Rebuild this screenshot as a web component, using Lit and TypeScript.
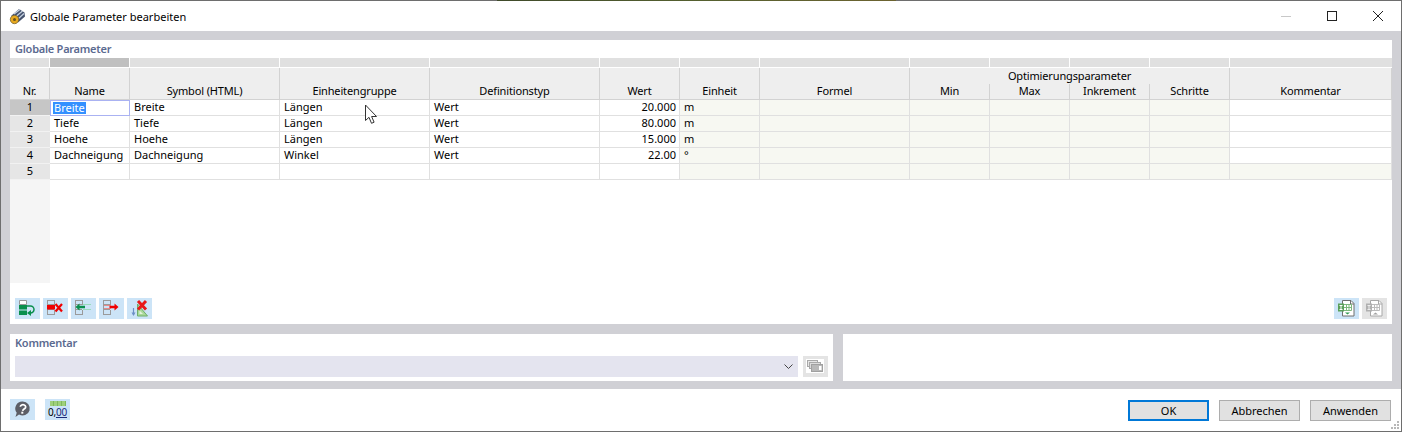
import { LitElement, html, css, svg } from "lit";
import { customElement } from "lit/decorators.js";

const columns = [
  { label: "Nr.", cls: "nr" },
  { label: "Name" },
  { label: "Symbol (HTML)" },
  { label: "Einheitengruppe" },
  { label: "Definitionstyp" },
  { label: "Wert" },
  { label: "Einheit" },
  { label: "Formel" },
  { label: "Min", opt: true },
  { label: "Max", opt: true },
  { label: "Inkrement", opt: true },
  { label: "Schritte", opt: true },
  { label: "Kommentar" },
];

const rows = [
  ["Breite", "Breite", "Längen", "Wert", "20.000", "m"],
  ["Tiefe", "Tiefe", "Längen", "Wert", "80.000", "m"],
  ["Hoehe", "Hoehe", "Längen", "Wert", "15.000", "m"],
  ["Dachneigung", "Dachneigung", "Winkel", "Wert", "22.00", "°"],
  ["", "", "", "", "", ""],
];

const frame = svg`<path d="M4 2.500h8M4 16.500h8M4.500 2v15M11.500 2v5M11.500 12v5" stroke="#9a9a9a" fill="none"/>
  <path d="M5 6.500h6M5 11.500h6" stroke="#9a9a9a" fill="none"/>`;

const icons: Record<string, unknown> = {
  add: svg`<path d="M4.500 2.500h7v4h-7z" fill="#fff" stroke="#9a9a9a"/>
    <rect x="4" y="7" width="8" height="4.500" fill="#0a8f4d"/>
    <rect x="4" y="12.500" width="8" height="4.500" fill="#0a8f4d"/>
    <path d="M12 8h3.500a3.500 3.500 0 0 1 0 7H15" fill="none" stroke="#0a8f4d" stroke-width="1.500"/>
    <path d="M16 12v6l-4-3z" fill="#0a8f4d"/>`,
  del: svg`${frame}<rect x="4" y="7" width="8" height="4.500" fill="#f00000"/>
    <path d="M12.500 6l6.500 7.500M19 6l-6.500 7.500" stroke="#f00000" stroke-width="2.200"/>`,
  left: svg`${frame}
    <path d="M12 6.500h8M12 11.500h8" stroke="#9adcbc" fill="none"/>
    <path d="M4.500 9l4-3.500v2.200h5.500v2.600h-5.500v2.200z" fill="#0a8f4d"/>`,
  right: svg`${frame}
    <path d="M5 7.500h7M5 10.500h7" stroke="#e98a8a" fill="none"/>
    <path d="M19.500 9l-4-3.500v2.200h-5v2.600h5v2.200z" fill="#f00000"/>`,
  tri: svg`<path d="M10.500 6v12h10z" fill="#a9d99a" stroke="#6fae6a"/>
    <path d="M12.500 12.500v3.500h3.500z" fill="#e4f2dc"/>
    <path d="M6.500 10v7" stroke="#6d8fc6" stroke-width="1.200"/>
    <path d="M4.500 14.500l2 3.500 2-3.500z" fill="#6d8fc6"/>
    <path d="M11 3l8 8.500M19 3l-8 8.500" stroke="#e81818" stroke-width="3"/>`,
  xlsIn: svg`<path d="M8.500 2.500h8.500l3 3v12.500h-11.500z" fill="#fff" stroke="#6f6f6f"/>
    <path d="M16.500 2.500v3.500h3.500" fill="none" stroke="#6f6f6f"/>
    <rect x="4" y="5.500" width="6" height="8" fill="#5aa05a"/>
    <path d="M5.500 7.500h3M5.500 11.500h3M7 7.500v4" stroke="#fff" fill="none"/>
    <path d="M10 6.500h7.500v6h-7.500M12.500 6.500v6M15 6.500v6M10 9.500h7.500" stroke="#7db87d" fill="none"/>
    <path d="M11 14.500h5l-2.500 2z" fill="#2f9a4f"/>`,
  xlsOut: svg`<path d="M8.500 2.500h8.500l3 3v12.500h-11.500z" fill="#fff" stroke="#a8a8a8"/>
    <path d="M16.500 2.500v3.500h3.500" fill="none" stroke="#a8a8a8"/>
    <rect x="4" y="5.500" width="6" height="8" fill="#b0b0b0"/>
    <path d="M5.500 7.500h3M5.500 11.500h3M7 7.500v4" stroke="#eee" fill="none"/>
    <path d="M10 6.500h7.500v6h-7.500M12.500 6.500v6M15 6.500v6M10 9.500h7.500" stroke="#bcbcbc" fill="none"/>
    <path d="M11 16.500h5l-2.500-2z" fill="#a0a0a0"/>`,
  pages: svg`<rect x="3" y="3" width="18" height="14" fill="#fff"/>
    <rect x="4.500" y="4.500" width="10" height="6" fill="#e6e6e6" stroke="#a8a8a8"/>
    <rect x="6.500" y="6.500" width="11" height="6" fill="#dcdcdc" stroke="#a8a8a8"/>
    <rect x="8.500" y="8.500" width="11" height="7" fill="#b8b8b8" stroke="#a0a0a0"/>
    <rect x="16" y="10" width="2.500" height="4" fill="#fff"/>`,
  help: svg`<path d="M12.700 2.500a7 7 0 1 1-3.700 12.900l-3.500 2.600 1.200-4.300a7 7 0 0 1 6-11.200z" fill="#5c5e66"/>
    <path d="M10.300 7.800a2.700 2.200 0 1 1 4.300 1.900c-1.100.7-1.700 1-1.900 2.200" fill="none" stroke="#fff" stroke-width="1.700"/>
    <rect x="11.300" y="12.700" width="2" height="2" fill="#fff"/>`,
};

@customElement("app-root")
export class AppRoot extends LitElement {
  static styles = css`
    :host { display: block; width: 1402px; height: 432px; font-family: "Noto Sans", sans-serif; font-size: 11px; color: #000; overflow: hidden; }
    * { box-sizing: border-box; }
    .win { width: 1402px; height: 432px; display: flex; flex-direction: column; background: #fff; border: 1px solid #6e6e6e; border-top: 0; position: relative; }
    .edge { height: 1px; flex: none; background: linear-gradient(90deg, #6e6e6e 0, #6e6e6e 497px, #3f4a2a 497px, #55602f 700px, #6c6330 896px, #6e6e6e 896px); margin: 0 -1px; }
    .titlebar { height: 30px; flex: none; display: flex; align-items: center; padding-left: 8px; }
    .titlebar .ticon { width: 17px; height: 17px; margin-right: 4px; }
    .title { font-size: 11px; color: #000; }
    .controls { margin-left: auto; display: flex; height: 30px; align-items: center; }
    .ctrl { width: 46px; height: 30px; display: flex; align-items: center; justify-content: center; }
    .ctrl svg { width: 12px; height: 12px; display: block; }
    .body { height: 358px; flex: none; background: #d0d0d5; padding: 9px 9px 8px; display: flex; flex-direction: column; gap: 10px; }
    .panel { background: #fff; }
    .main { height: 284px; flex: none; display: flex; flex-direction: column; }
    .ptitle { height: 18px; flex: none; padding-left: 5px; font-weight: 600; color: #5b6a90; line-height: 18px; letter-spacing: -0.25px; }
    .grid { display: grid; grid-template-columns: 40px 80px 150px 150px 170px 80px 80px 150px 80px 80px 80px 80px 162px; grid-template-rows: 10px 16px 16px repeat(5, 16px); width: 1382px; }
    .strip { background: #e0e0e0; border-right: 1px solid #fff; border-bottom: 1px solid #fff; }
    .strip.sel { background: #c0c0c0; }
    .strip.last { border-right: 0; }
    .hd { background: #eeeeee; display: flex; align-items: center; justify-content: center; white-space: nowrap; line-height: 16px; letter-spacing: -0.15px; }
    .hd.full { grid-row: 2 / span 2; align-items: flex-end; border-right: 1px solid #d2d2d2; border-bottom: 1px solid #d2d2d2; }
    .hd.group { grid-row: 2; grid-column: 9 / span 4; border-right: 1px solid #d2d2d2; }
    .hd.sub { grid-row: 3; border-right: 1px solid #d2d2d2; border-bottom: 1px solid #d2d2d2; padding-bottom: 1px; }
    .c { border-right: 1px solid #e0e0e0; border-bottom: 1px solid #e0e0e0; padding: 0 3px 0 4px; line-height: 14px; white-space: nowrap; overflow: hidden; }
    .c.n { background: #e6e6e6; text-align: center; padding: 0; border-bottom-color: #f2f2f2; border-right: 0; }
    .c.n.active { background: #c6c6c6; }
    .c.num { text-align: right; }
    .c.soft { background: #f7f8f2; }
    .c.sel { border: 1px solid #aab2f2; padding: 0 3px 0 2px; line-height: 13px; }
    .c.sel span { background: #3390ff; color: #fff; padding: 0 1px; display: inline-block; height: 12px; line-height: 12px; margin-top: 1px; }
    .filler { width: 40px; height: 103px; background: #f5f5f5; flex: none; }
    .tools { display: flex; justify-content: space-between; padding: 15px 5px 5px; height: 41px; flex: none; }
    .icons { display: flex; gap: 3px; }
    .ib { width: 25px; height: 21px; background: #cce4f7; flex: none; display: block; }
    .ib.off { background: #e4e4e4; }
    .lower { display: flex; gap: 10px; height: 47px; flex: none; }
    .komm { width: 823px; flex: none; padding: 0 5px; }
    .komm .ktitle { height: 22px; line-height: 18px; font-weight: 600; color: #5b6a90; letter-spacing: -0.25px; }
    .side { flex: 1; }
    .comborow { display: flex; gap: 5px; }
    .combo { width: 783px; height: 21px; background: #e4e4ef; display: flex; justify-content: flex-end; align-items: center; padding-right: 5px; }
    .combo svg { width: 9px; height: 6px; display: block; }
    .footer { flex: 1; display: flex; align-items: flex-start; padding: 10px 10px 0 9px; }
    .footer .ib { margin-right: 10px; }
    .num-icon { display: flex; flex-direction: column; align-items: center; }
    .ruler { width: 16px; height: 5px; margin-top: 2px; flex: none; background: repeating-linear-gradient(90deg, #9fd07a 0 3px, #7fb85c 3px 4px); }
    .zero { font-size: 10px; line-height: 11px; margin-top: 1px; color: #000; white-space: nowrap; letter-spacing: -0.2px; }
    .zero u { color: #1a2a7a; }
    .btns { margin-left: auto; display: flex; gap: 10px; margin-top: 1px; }
    .btn { width: 81px; height: 21px; background: #e1e1e1; border: 1px solid #adadad; display: flex; align-items: center; justify-content: center; font-size: 11px; color: #000; }
    .btn.def { border: 2px solid #0078d7; }
    .grip { position: absolute; right: 1px; bottom: 1px; width: 10px; height: 10px; }
    .cursor { position: absolute; left: 363px; top: 104px; width: 14px; height: 21px; }
  `;

  private icon(name: string, off = false) {
    return html`<svg class="ib ${off ? "off" : ""}" viewBox="0 0 25 21">${icons[name]}</svg>`;
  }

  render() {
    const last = columns.length - 1;
    return html`
      <div class="win">
        <div class="edge"></div>
        <div class="titlebar">
          <svg class="ticon" viewBox="0 0 17 17">
            <path d="M2 8l8-7 5.500 3.500.5 4-7 6z" fill="#46536f"/>
            <path d="M5 6l6-4.500M7.500 8l6-5M9.500 10.500l5.500-5" stroke="#c6d2e2" stroke-width="1.200"/>
            <circle cx="5.500" cy="11.500" r="4.200" fill="#e6a81e" stroke="#7a6430" stroke-width=".8"/>
            <circle cx="5.500" cy="11.500" r="1.500" fill="#6a5420"/>
          </svg>
          <span class="title">Globale Parameter bearbeiten</span>
          <div class="controls">
            <div class="ctrl"><svg viewBox="0 0 12 12"><path d="M1 6.500h10" stroke="#c8c8c8"/></svg></div>
            <div class="ctrl"><svg viewBox="0 0 12 12"><rect x="1.500" y="1.500" width="9" height="9" fill="none" stroke="#222"/></svg></div>
            <div class="ctrl"><svg viewBox="0 0 12 12"><path d="M1 1l10 10M11 1l-10 10" stroke="#222"/></svg></div>
          </div>
        </div>
        <div class="body">
          <div class="panel main">
            <div class="ptitle">Globale Parameter</div>
            <div class="grid">
              ${columns.map((_, i) => html`<div class="strip ${i === 1 ? "sel" : ""} ${i === last ? "last" : ""}"></div>`)}
              ${columns.map((c, i) =>
                c.opt
                  ? i === 8
                    ? html`<div class="hd group">Optimierungsparameter</div><div class="hd sub" style="grid-column:${i + 1}">${c.label}</div>`
                    : html`<div class="hd sub" style="grid-column:${i + 1}">${c.label}</div>`
                  : html`<div class="hd full" style="grid-column:${i + 1}">${c.label}</div>`
              )}
              ${rows.map((r, ri) => html`
                <div class="c n ${ri === 0 ? "active" : ""}">${ri + 1}</div>
                ${r.map((v, ci) => {
                  if (ri === 0 && ci === 0) return html`<div class="c sel"><span>${v}</span></div>`;
                  return html`<div class="c ${ci === 4 ? "num" : ""} ${ci === 5 ? "soft" : ""}">${v}</div>`;
                })}
                ${[0, 1, 2, 3, 4].map(() => html`<div class="c soft"></div>`)}
                <div class="c ${ri === 4 ? "soft" : ""}"></div>
              `)}
            </div>
            <div class="filler"></div>
            <div class="tools">
              <div class="icons">${["add", "del", "left", "right", "tri"].map((n) => this.icon(n))}</div>
              <div class="icons">${this.icon("xlsIn")}${this.icon("xlsOut", true)}</div>
            </div>
          </div>
          <div class="lower">
            <div class="panel komm">
              <div class="ktitle">Kommentar</div>
              <div class="comborow">
                <div class="combo"><svg viewBox="0 0 9 6"><path d="M.5 .5l4 4 4-4" fill="none" stroke="#444"/></svg></div>
                ${this.icon("pages", true)}
              </div>
            </div>
            <div class="panel side"></div>
          </div>
        </div>
        <div class="footer">
          ${this.icon("help")}
          <div class="ib num-icon"><div class="ruler"></div><div class="zero">0,<u>00</u></div></div>
          <div class="btns">
            <div class="btn def">OK</div>
            <div class="btn">Abbrechen</div>
            <div class="btn">Anwenden</div>
          </div>
        </div>
        <svg class="cursor" viewBox="0 0 14 21">
          <path d="M1.500 1v15.500l3.500-3.200 2.500 6 2.600-1.100-2.500-5.700h4.900z" fill="#fff" stroke="#333"/>
        </svg>
        <svg class="grip" viewBox="0 0 10 10">
          <path d="M7 1h2v2H7zM4 4h2v2H4zM7 4h2v2H7zM1 7h2v2H1zM4 7h2v2H4zM7 7h2v2H7z" fill="#b8b8b8"/>
        </svg>
      </div>
    `;
  }
}
